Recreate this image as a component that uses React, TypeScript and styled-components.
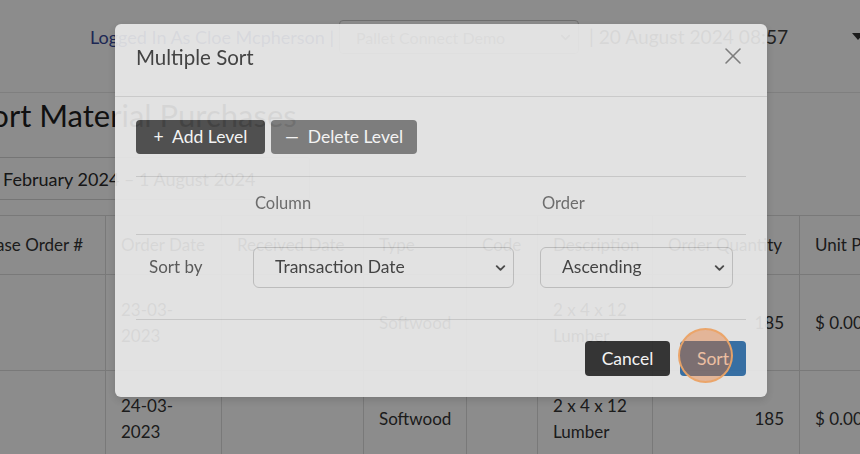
import styled, { createGlobalStyle } from 'styled-components';
import { ChevronDown, X } from 'lucide-react';

const GlobalStyle = createGlobalStyle`
  html, body {
    margin: 0;
    padding: 0;
  }
  body {
    font-family: Lato, "Open Sans", sans-serif;
    background: #fff;
    overflow: hidden;
  }
`;

const Page = styled.div`
  position: relative;
  width: 860px;
  height: 454px;
  overflow: hidden;
  background: #fff;
  color: #333;
`;

/* ---------- page behind the dialog ---------- */

const TopBar = styled.header`
  height: 93px;
  box-sizing: border-box;
  display: flex;
  align-items: flex-start;
  padding: 20px 0 0 90px;
  border-bottom: 1px solid #e8e8e8;
  white-space: nowrap;
`;

const UserText = styled.span`
  line-height: 34px;
  font-size: 18px;
  color: #37499a;
`;

const CompanySelect = styled.div`
  margin-left: 5px;
  width: 240px;
  height: 34px;
  flex-shrink: 0;
  box-sizing: border-box;
  display: flex;
  align-items: center;
  justify-content: space-between;
  padding: 0 5px 0 16px;
  border: 1px solid #c8c8c8;
  border-radius: 4px;
  font-size: 16px;
  color: #7a7a7a;
`;

const DateText = styled.span`
  margin-left: 10px;
  line-height: 34px;
  font-size: 19.2px;
  color: #3e3e3e;
`;

const UserCaret = styled.span`
  margin: 13px 0 0 64px;
  width: 0;
  height: 0;
  border-left: 6px solid transparent;
  border-right: 6px solid transparent;
  border-top: 7px solid #333;
`;

const Main = styled.main`
  margin-left: -66px;
  width: 1040px;
`;

const PageTitle = styled.h1`
  margin: 0;
  padding: 3px 0 0 6px;
  font-size: 31px;
  line-height: 38px;
  font-weight: 400;
  color: #1e1e1e;
`;

const DateRange = styled.div`
  margin: 23px 0 0 43px;
  width: 333px;
  height: 43px;
  box-sizing: border-box;
  display: flex;
  align-items: center;
  padding-left: 10px;
  border: 1px solid #d6d6d6;
  border-radius: 3px;
  font-size: 18px;
  color: #2a2a2a;
`;

const DataTable = styled.div`
  margin: 15px 0 0 4px;
  border-top: 1px solid #dcdcdc;
`;

const DataRow = styled.div<{ $height: number }>`
  display: grid;
  grid-template-columns: 168px 116px 142px 103px 71px 115px 147px 140px;
  height: ${(p) => p.$height}px;
  border-bottom: 1px solid #dcdcdc;
`;

const DataCell = styled.div<{ $align?: 'left' | 'right'; $nowrap?: boolean }>`
  display: flex;
  align-items: center;
  justify-content: ${(p) => (p.$align === 'right' ? 'flex-end' : 'flex-start')};
  padding: 0 15px;
  border-right: 1px solid #dcdcdc;
  font-size: 17px;
  line-height: 26px;
  color: #333;
  white-space: ${(p) => (p.$nowrap ? 'nowrap' : 'normal')};
  overflow: hidden;
`;

/* ---------- dialog ---------- */

const Backdrop = styled.div`
  position: absolute;
  inset: 0;
  display: flex;
  align-items: flex-start;
  padding: 24px 0 0 115px;
  box-sizing: border-box;
  background: rgba(0, 0, 0, 0.45);
`;

const Dialog = styled.section`
  width: 652px;
  background: #ededed;
  border-radius: 6px;
  opacity: 0.9;
  box-shadow: 0 3px 9px rgba(0, 0, 0, 0.15);
`;

const DialogHeader = styled.div`
  height: 73px;
  box-sizing: border-box;
  display: flex;
  align-items: flex-start;
  justify-content: space-between;
  padding: 20px 20px 0 21px;
  border-bottom: 1px solid #d2d2d2;
`;

const DialogTitle = styled.h2`
  margin: 0;
  font-size: 20.5px;
  line-height: 26px;
  font-weight: 400;
  color: #3b3b3b;
`;

const CloseButton = styled.button`
  margin-top: -2px;
  padding: 0;
  border: 0;
  background: none;
  color: #7c7c7c;
  display: flex;
`;

const DialogBody = styled.div`
  padding: 23px 21px 21px;
`;

const ButtonRow = styled.div<{ $end?: boolean }>`
  display: flex;
  gap: ${(p) => (p.$end ? '10px' : '6px')};
  justify-content: ${(p) => (p.$end ? 'flex-end' : 'flex-start')};
  margin-top: ${(p) => (p.$end ? '21px' : '0')};
`;

const buttonColors = {
  dark: '#4a4a4a',
  gray: '#7c7c7c',
  black: '#2c2c2c',
  primary: '#2e6ca6',
};

const ActionButton = styled.button<{ $tone: keyof typeof buttonColors; $w: number }>`
  position: relative;
  width: ${(p) => p.$w}px;
  height: ${(p) => (p.$tone === 'dark' || p.$tone === 'gray' ? 34 : 35)}px;
  padding: 0;
  border: 0;
  border-radius: 4px;
  background: ${(p) => buttonColors[p.$tone]};
  color: #fff;
  font-family: Lato, "Open Sans", sans-serif;
  font-size: 17.5px;
  line-height: 1;
  white-space: pre;
`;

const ClickRing = styled.span`
  position: absolute;
  left: -2px;
  top: -13px;
  width: 55px;
  height: 55px;
  box-sizing: border-box;
  border-radius: 50%;
  border: 2px solid rgba(246, 168, 100, 0.95);
  background: rgba(240, 110, 30, 0.4);
  pointer-events: none;
`;

const SortGrid = styled.div`
  margin-top: 22px;
  border-top: 1px solid #cecece;
`;

const SortRow = styled.div<{ $height: number }>`
  display: grid;
  grid-template-columns: 104px 287px 1fr;
  align-items: start;
  height: ${(p) => p.$height}px;
  border-bottom: 1px solid #cecece;
`;

const HeadLabel = styled.div`
  padding: 16px 15px 0;
  font-size: 16.5px;
  line-height: 20px;
  color: #6a6a6a;
`;

const RowCell = styled.div`
  padding: 12px 13px 0;
`;

const RowLabel = styled(RowCell)`
  font-size: 17px;
  line-height: 39px;
  color: #555;
`;

const SelectWrap = styled.div`
  position: relative;
  color: #444;

  svg {
    position: absolute;
    right: 6px;
    top: 50%;
    transform: translateY(-50%);
    pointer-events: none;
  }
`;

const Select = styled.select`
  width: 100%;
  height: 41px;
  appearance: none;
  border: 1px solid #c2c2c2;
  border-radius: 6px;
  background: transparent;
  padding: 0 30px 2px 21px;
  font-family: Lato, "Open Sans", sans-serif;
  font-size: 17.5px;
  color: #3d3d3d;
`;

const purchases = [
  { date: '23-03-2023', type: 'Softwood', description: '2 x 4 x 12 Lumber', qty: '185', price: '$ 0.00' },
  { date: '24-03-2023', type: 'Softwood', description: '2 x 4 x 12 Lumber', qty: '185', price: '$ 0.00' },
];

const headings = [
  'Purchase Order #',
  'Order Date',
  'Received Date',
  'Type',
  'Code',
  'Description',
  'Order Quantity',
  'Unit Price',
];

export default function App() {
  return (
    <Page>
      <GlobalStyle />
      <TopBar>
        <UserText>Logged In As Cloe Mcpherson |</UserText>
        <CompanySelect>
          Pallet Connect Demo
          <ChevronDown size={15} strokeWidth={2.5} />
        </CompanySelect>
        <DateText>| 20 August 2024 08:57</DateText>
        <UserCaret />
      </TopBar>

      <Main>
        <PageTitle>Import Material Purchases</PageTitle>
        <DateRange>1 February 2024 – 1 August 2024</DateRange>
        <DataTable>
          <DataRow $height={58}>
            {headings.map((h) => (
              <DataCell key={h} $nowrap>
                {h}
              </DataCell>
            ))}
          </DataRow>
          {purchases.map((p) => (
            <DataRow $height={95} key={p.date}>
              <DataCell />
              <DataCell>{p.date}</DataCell>
              <DataCell />
              <DataCell>{p.type}</DataCell>
              <DataCell />
              <DataCell>{p.description}</DataCell>
              <DataCell $align="right">{p.qty}</DataCell>
              <DataCell>{p.price}</DataCell>
            </DataRow>
          ))}
        </DataTable>
      </Main>

      <Backdrop>
        <Dialog>
          <DialogHeader>
            <DialogTitle>Multiple Sort</DialogTitle>
            <CloseButton aria-label="Close">
              <X size={28} strokeWidth={1.3} />
            </CloseButton>
          </DialogHeader>
          <DialogBody>
            <ButtonRow>
              <ActionButton $tone="dark" $w={129}>+  Add Level</ActionButton>
              <ActionButton $tone="gray" $w={146}>—  Delete Level</ActionButton>
            </ButtonRow>

            <SortGrid>
              <SortRow $height={57}>
                <HeadLabel />
                <HeadLabel>Column</HeadLabel>
                <HeadLabel>Order</HeadLabel>
              </SortRow>
              <SortRow $height={84}>
                <RowLabel>Sort by</RowLabel>
                <RowCell>
                  <SelectWrap>
                    <Select defaultValue="date">
                      <option value="date">Transaction Date</option>
                      <option value="type">Type</option>
                    </Select>
                    <ChevronDown size={15} strokeWidth={3} />
                  </SelectWrap>
                </RowCell>
                <RowCell>
                  <SelectWrap>
                    <Select defaultValue="asc">
                      <option value="asc">Ascending</option>
                      <option value="desc">Descending</option>
                    </Select>
                    <ChevronDown size={15} strokeWidth={3} />
                  </SelectWrap>
                </RowCell>
              </SortRow>
            </SortGrid>

            <ButtonRow $end>
              <ActionButton $tone="black" $w={85}>Cancel</ActionButton>
              <ActionButton $tone="primary" $w={66}>
                Sort
                <ClickRing />
              </ActionButton>
            </ButtonRow>
          </DialogBody>
        </Dialog>
      </Backdrop>
    </Page>
  );
}
